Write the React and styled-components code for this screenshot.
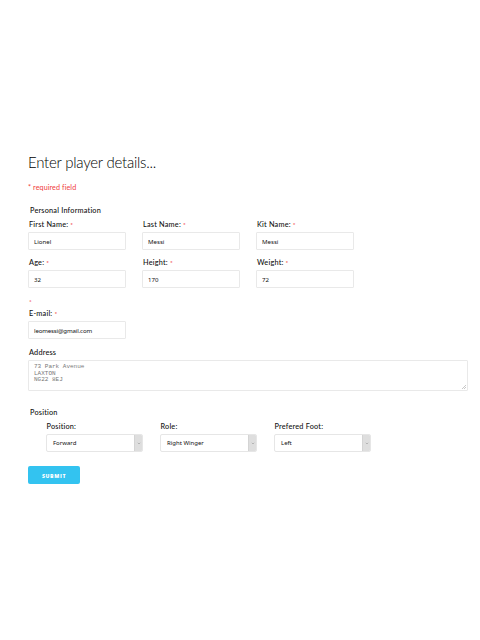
import React from "react";
import styled, { createGlobalStyle } from "styled-components";

const GlobalStyle = createGlobalStyle`
  * { box-sizing: border-box; }
  body { margin: 0; background: #fff; }
`;

const Page = styled.main`
  width: 480px;
  height: 640px;
  padding: 152px 12px 0 28px;
  overflow: hidden;
  background: #fff;
  color: #111;
  font-family: Lato, sans-serif;
`;

const Title = styled.h1`
  margin: 0;
  height: 20px;
  font-size: 15px;
  line-height: 20px;
  font-weight: 300;
  letter-spacing: -0.24px;
  color: #000;
  white-space: nowrap;
`;

const RequiredNote = styled.p`
  margin: 10px 0;
  height: 12px;
  font-size: 7.2px;
  line-height: 12px;
  letter-spacing: 0.09px;
  color: #f03c3c;
`;

const Legend = styled.h2`
  margin: 0 0 0 2px;
  height: 13px;
  font-size: 7.3px;
  line-height: 13px;
  font-weight: 500;
  letter-spacing: 0.2px;
`;

const FieldRow = styled.div`
  display: grid;
  grid-template-columns: repeat(3, 97px);
  column-gap: 17px;
  margin-left: ${(p) => p.$indent || "0"};
  margin-bottom: ${(p) => p.$after || "0"};
`;

const FieldBox = styled.div`
  display: flex;
  flex-direction: column;
  margin-bottom: ${(p) => p.$after || "0"};
`;

const LabelText = styled.label`
  height: 15px;
  padding-top: 1px;
  padding-left: ${(p) => p.$inset || "1px"};
  font-size: 7.3px;
  line-height: 14px;
  font-weight: 500;
  letter-spacing: 0.2px;
  white-space: pre;
`;

const Star = styled.span`
  color: #f03c3c;
  font-size: 6.5px;
  letter-spacing: 0;
`;

const Input = styled.input`
  width: 98px;
  height: 18px;
  margin: 0;
  padding: 0 5px;
  border: 1px solid #e9e9e9;
  border-radius: 1px;
  outline: none;
  background: #fff;
  color: #111;
  font: 6.1px "Noto Sans", sans-serif;
  letter-spacing: ${(p) => p.$spacing || "0"};
`;

const StrayMark = styled.div`
  height: 13px;
  padding: 0 0 0 1px;
  line-height: 10px;
`;

const AddressBox = styled.div`
  position: relative;
  width: 440px;
  height: 31px;
`;

const AddressInput = styled.textarea`
  display: block;
  width: 100%;
  height: 100%;
  margin: 0;
  padding: 3px 5px;
  border: 1px solid #e9e9e9;
  border-radius: 1px;
  outline: none;
  resize: none;
  overflow: hidden;
  background: #fff;
  color: #777;
  font: 6px/6.7px "Liberation Mono", monospace;
`;

const ResizeGrip = styled.svg`
  position: absolute;
  right: 2px;
  bottom: 2px;
  width: 4px;
  height: 4px;
`;

const Picker = styled.span`
  display: flex;
  width: 97px;
  height: 18px;
  border: 1px solid #e6e6e6;
  border-radius: 2px;
  overflow: hidden;
`;

const PickerValue = styled.span`
  flex: 1;
  padding-left: 6px;
  font: 6px/17px "Noto Sans", sans-serif;
`;

const PickerArrow = styled.span`
  display: grid;
  place-items: center;
  width: 8px;
  background: #dedede;
  border-left: 1px solid #d4d4d4;
`;

const Submit = styled.button`
  display: block;
  width: 52px;
  height: 18px;
  margin: 14px 0 0;
  padding: 1px 0 0;
  border: 0;
  border-radius: 2px;
  background: #33c3f0;
  color: #fff;
  font: 800 5.2px "Open Sans", sans-serif;
  letter-spacing: 0.65px;
`;

function Field({ label, value, spacing }) {
  return (
    <FieldBox>
      <LabelText>
        {label} <Star>*</Star>
      </LabelText>
      <Input aria-label={label} defaultValue={value} $spacing={spacing} />
    </FieldBox>
  );
}

function Select({ label, value }) {
  return (
    <FieldBox>
      <LabelText $inset="0.5px">{label}</LabelText>
      <Picker>
        <PickerValue>{value}</PickerValue>
        <PickerArrow>
          <svg width="4" height="3" viewBox="0 0 4 3">
            <path d="M.8 .8L2 2l1.2-1.2" fill="none" stroke="#999" strokeWidth=".6" />
          </svg>
        </PickerArrow>
      </Picker>
    </FieldBox>
  );
}

export default function App() {
  return (
    <Page>
      <GlobalStyle />
      <Title>Enter player details...</Title>
      <RequiredNote>* required field</RequiredNote>
      <Legend>Personal Information</Legend>
      <FieldRow $after="5px">
        <Field label="First Name:" value="Lionel" />
        <Field label="Last Name:" value="Messi" />
        <Field label="Kit Name:" value="Messi" />
      </FieldRow>
      <FieldRow $after="5px">
        <Field label="Age:" value="32" />
        <Field label="Height:" value="170" />
        <Field label="Weight:" value="72" />
      </FieldRow>
      <StrayMark><Star>*</Star></StrayMark>
      <FieldRow $after="6px">
        <Field label="E-mail:" value="leomessi@gmail.com" spacing="-0.15px" />
      </FieldRow>
      <FieldBox $after="15px">
        <LabelText>Address</LabelText>
        <AddressBox>
          <AddressInput spellCheck={false} defaultValue={"73 Park Avenue\nLAXTON\nNG22 8EJ"} />
          <ResizeGrip viewBox="0 0 4 4">
            <path d="M0 4L4 0M2 4L4 2" stroke="#bbb" strokeWidth=".8" />
          </ResizeGrip>
        </AddressBox>
      </FieldBox>
      <Legend>Position</Legend>
      <FieldRow $indent="18px">
        <Select label="Position:" value="Forward" />
        <Select label="Role:" value="Right Winger" />
        <Select label="Prefered Foot:" value="Left" />
      </FieldRow>
      <Submit>SUBMIT</Submit>
    </Page>
  );
}
